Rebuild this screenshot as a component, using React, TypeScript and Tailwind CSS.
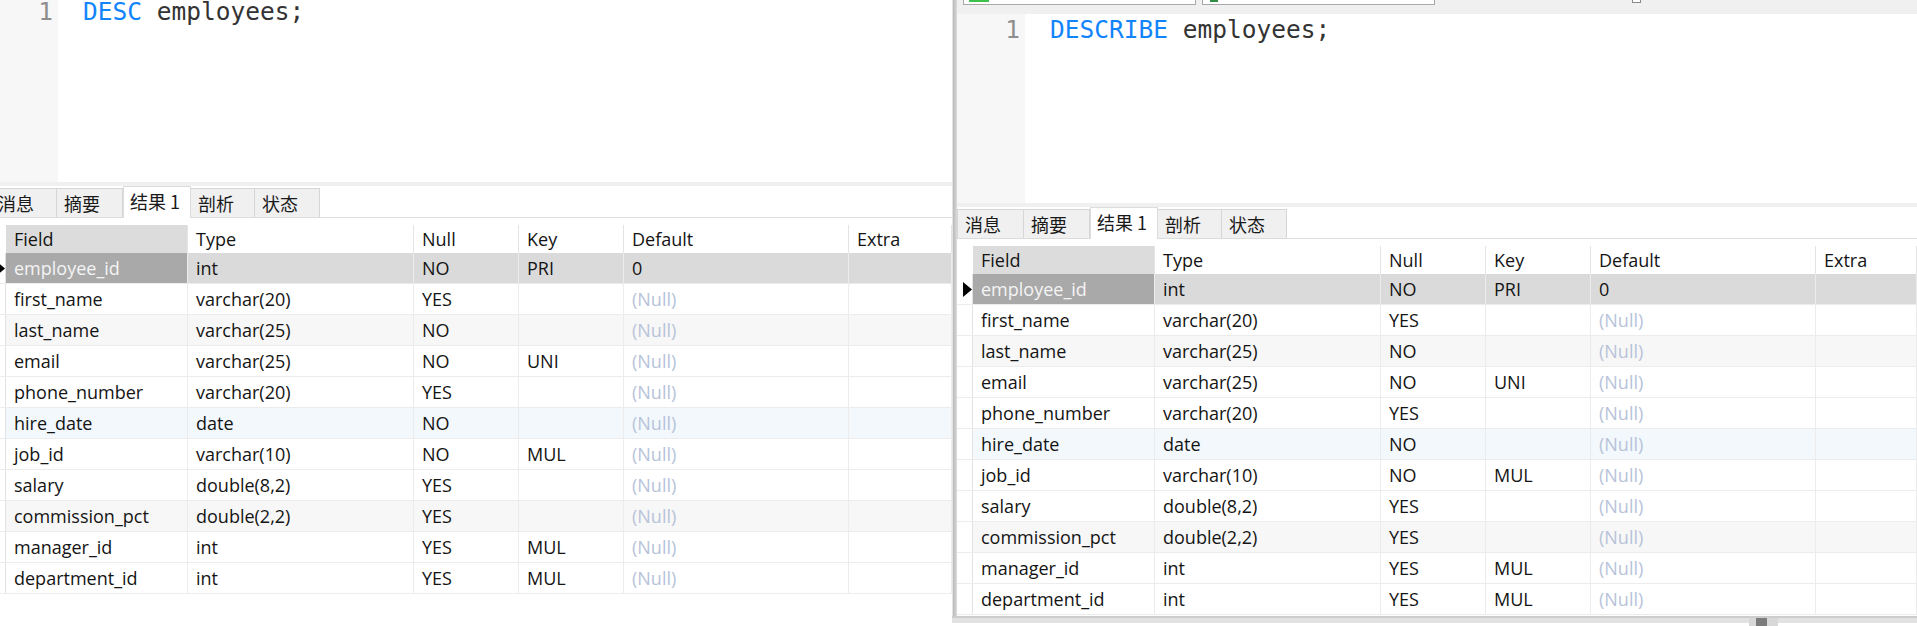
import React from "react";

type Row = {
  field: string;
  type: string;
  nul: string;
  key: string;
  def: string | null;
  bg: string;
};

// Row tints as they appear in the grid: selected, white, zebra, hover.
const ROWS: Row[] = [
  { field: "employee_id", type: "int", nul: "NO", key: "PRI", def: "0", bg: "bg-[#dadada]" },
  { field: "first_name", type: "varchar(20)", nul: "YES", key: "", def: null, bg: "bg-white" },
  { field: "last_name", type: "varchar(25)", nul: "NO", key: "", def: null, bg: "bg-[#f7f7f7]" },
  { field: "email", type: "varchar(25)", nul: "NO", key: "UNI", def: null, bg: "bg-white" },
  { field: "phone_number", type: "varchar(20)", nul: "YES", key: "", def: null, bg: "bg-white" },
  { field: "hire_date", type: "date", nul: "NO", key: "", def: null, bg: "bg-[#f3f8fd]" },
  { field: "job_id", type: "varchar(10)", nul: "NO", key: "MUL", def: null, bg: "bg-white" },
  { field: "salary", type: "double(8,2)", nul: "YES", key: "", def: null, bg: "bg-white" },
  { field: "commission_pct", type: "double(2,2)", nul: "YES", key: "", def: null, bg: "bg-[#f7f7f7]" },
  { field: "manager_id", type: "int", nul: "YES", key: "MUL", def: null, bg: "bg-white" },
  { field: "department_id", type: "int", nul: "YES", key: "MUL", def: null, bg: "bg-white" },
];

const COLS = ["Field", "Type", "Null", "Key", "Default", "Extra"];
const COL_W = ["w-[182px]", "w-[226px]", "w-[105px]", "w-[105px]", "w-[225px]", "flex-1"];

const TABS = [
  { label: "消息", w: "w-[67px]" },
  { label: "摘要", w: "w-[66px]" },
  { label: "结果 1", w: "w-[68px]", active: true },
  { label: "剖析", w: "w-[64px]" },
  { label: "状态", w: "w-[65px]" },
];

const mono = "font-['DejaVu_Sans_Mono',monospace]";
const ui = "font-['Open_Sans','Noto_Sans_CJK_SC',sans-serif]";

function Editor({ keyword, height, codePad }: { keyword: string; height: string; codePad: string }) {
  return (
    <div className={`flex ${height} bg-white ${mono} text-[24.5px] leading-[24px]`}>
      <div className={`w-[68px] shrink-0 bg-[#f7f7f7] pr-[5px] text-right text-[#8e8e8e] ${codePad}`}>1</div>
      <div className={`pl-[25px] whitespace-pre text-[#333333] ${codePad}`}>
        <span className="text-[#1284fb]">{keyword}</span> employees;
      </div>
    </div>
  );
}

function Tabs() {
  return (
    <div className="flex h-[32px] items-end border-b border-[#dcdcdc] bg-white font-['Noto_Sans_CJK_SC',sans-serif] text-[18px] text-[#1a1a1a]">
      {TABS.map((t, i) =>
        t.active ? (
          <div
            key={t.label}
            className={`${t.w} relative -mb-px flex h-[32px] items-center border-x border-t border-[#dcdcdc] bg-white px-[6px] pb-[2px]`}
          >
            {t.label}
          </div>
        ) : (
          <div
            key={t.label}
            className={`${t.w} flex h-[29px] items-center border-t border-r border-[#d6d6d6] bg-[#f0f0f0] px-[7px] ${i === 0 ? "border-l" : ""}`}
          >
            {t.label}
          </div>
        )
      )}
    </div>
  );
}

function Grid() {
  return (
    <div className={`mt-[7px] ${ui} text-[18px] text-[#141414]`}>
      {/* header */}
      <div className="flex h-[28px]">
        <div className="w-[16px] shrink-0 bg-white" />
        {COLS.map((c, i) => (
          <div
            key={c}
            className={`${COL_W[i]} flex shrink-0 items-center border-r border-[#e4e4e4] pl-[8px] ${i === 0 ? "bg-[#dcdcdc]" : "bg-white"}`}
          >
            {c}
          </div>
        ))}
      </div>
      {/* rows */}
      {ROWS.map((r, ri) => {
        const cells = [r.field, r.type, r.nul, r.key, r.def, ""];
        return (
          <div key={r.field} className={`flex h-[31px] border-b border-[#ececec] ${r.bg}`}>
            <div className="flex w-[16px] shrink-0 items-center border-r border-[#e2e2e2] bg-white pl-[6px]">
              {ri === 0 && (
                <svg width="9" height="15" viewBox="0 0 9 15">
                  <path d="M0 0 L9 7.5 L0 15 Z" fill="#000" />
                </svg>
              )}
            </div>
            {cells.map((v, ci) => (
              <div
                key={ci}
                className={`${COL_W[ci]} flex shrink-0 items-center border-r border-[#ececec] pl-[8px] whitespace-nowrap ${
                  ri === 0 && ci === 0 ? "bg-[#a9a9a9] text-[#f4f4f4]" : ""
                } ${v === null ? "text-[#b7c3d9]" : ""}`}
              >
                {v === null ? "(Null)" : v}
              </div>
            ))}
          </div>
        );
      })}
    </div>
  );
}

function QueryPanel({ keyword, editorHeight, codePad }: { keyword: string; editorHeight: string; codePad: string }) {
  return (
    <div className="flex flex-col bg-white">
      <Editor keyword={keyword} height={editorHeight} codePad={codePad} />
      <div className="h-[4px] bg-[#f0f0f0]" />
      <Tabs />
      <Grid />
    </div>
  );
}

function Toolbar() {
  return (
    <div className="flex h-[14px] items-start bg-[#f0f0f0]">
      <div className="ml-[6px] flex h-[5px] w-[233px] items-start border-x border-b border-[#a9a9a9] bg-white pl-[5px]">
        <div className="h-[2px] w-[20px] bg-[#3cc24a]" />
      </div>
      <div className="ml-[6px] flex h-[5px] w-[233px] items-start border-x border-b border-[#a9a9a9] bg-white pl-[7px]">
        <div className="h-[2px] w-[8px] bg-[#2f8f46]" />
      </div>
      <div className="ml-[197px] h-[3px] w-[9px] border-x border-b border-[#8a8a8a] bg-white" />
    </div>
  );
}

function BottomBar() {
  return (
    <div className="flex h-[10px] flex-col">
      <div className="relative h-[7px] border-t-2 border-[#cdcdcd] bg-[#e2e2e2]">
        <div className="absolute top-0 left-[797px] h-[8px] w-[29px] bg-[#d8d8d8]">
          <div className="ml-[7px] h-[8px] w-[11px] bg-[#7c7c7c]" />
        </div>
      </div>
      <div className="flex-1 bg-white" />
    </div>
  );
}

export default function App() {
  return (
    <div className="flex h-[626px] w-[1917px] overflow-hidden bg-white">
      {/* left screenshot, partly covered by the right one */}
      <div className="h-full w-[952px] shrink-0 overflow-hidden">
        <div className="-ml-[10px] w-[962px]">
          <QueryPanel keyword="DESC" editorHeight="h-[182px]" codePad="pt-0" />
        </div>
      </div>
      {/* right screenshot */}
      <div className="flex h-full min-w-0 flex-1 flex-col">
        <div className="flex min-h-0 flex-1">
          <div className="w-[5px] shrink-0 border-l border-[#e4e4e4] bg-linear-to-r from-[#b9b9b9] to-[#dadada]" />
          <div className="min-w-0 flex-1 overflow-hidden">
            <Toolbar />
            <QueryPanel keyword="DESCRIBE" editorHeight="h-[189px]" codePad="pt-[4px]" />
          </div>
        </div>
        <BottomBar />
      </div>
    </div>
  );
}
